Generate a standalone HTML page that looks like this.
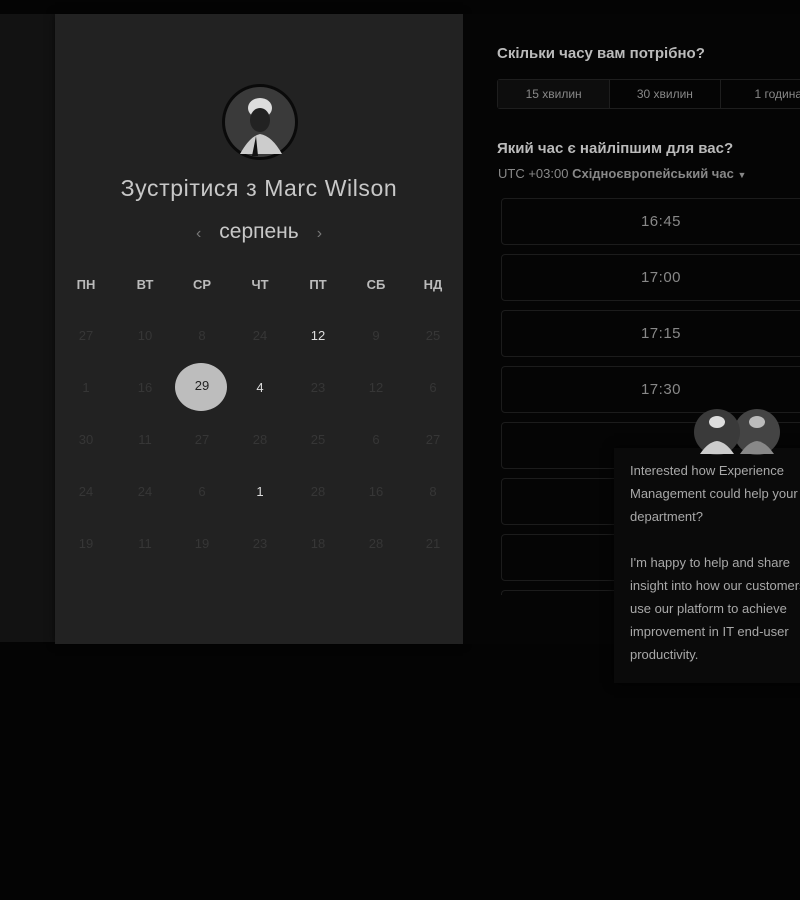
<!DOCTYPE html>
<html><head><meta charset="utf-8"><style>
*{margin:0;padding:0;box-sizing:border-box}
body{width:800px;height:900px;background:#040404;position:relative;overflow:hidden;font-family:"Liberation Sans",sans-serif}
.abs{position:absolute}
.left{left:0;top:14px;width:463px;height:628px;background:#121212}
.card{left:55px;top:14px;width:408px;height:630px;background:#222;box-shadow:0 0 8px rgba(0,0,0,.6)}
.right{left:463px;top:14px;width:337px;height:630px;background:#050505}
.d{position:absolute;width:40px;text-align:center;font-size:13px;color:#3a3a3a;transform:translate(-20px,-8px)}
.h{position:absolute;width:40px;text-align:center;font-size:13px;font-weight:bold;color:#bbb;transform:translate(-20px,-8px)}
.slot{position:absolute;left:501px;width:320px;height:47px;border:1px solid #1c1c1c;border-radius:4px;color:#888;font-size:15px;text-align:center;line-height:45px;letter-spacing:.5px}
.pt{font-size:13px;color:#a8a8a8;line-height:23px}
</style></head><body>
<div class="abs left"></div>
<div class="abs card"></div>
<div class="abs right"></div>
<svg class="abs" style="left:220px;top:84px" width="80" height="76"><circle cx="40" cy="38" r="38" fill="#0a0a0a"/><circle cx="40" cy="38" r="35" fill="#3a3a3a"/><ellipse cx="40" cy="24" rx="12" ry="10" fill="#ddd"/><ellipse cx="40" cy="36" rx="10" ry="12" fill="#222"/><path d="M20 70 Q30 52 40 50 Q52 52 62 70 Z" fill="#ccc"/><path d="M36 52 L32 72 L38 72 Z" fill="#111"/></svg>
<div class="abs" style="left:55px;width:408px;top:175px;text-align:center;font-size:23px;letter-spacing:0.6px;color:#c8c8c8">Зустрітися з Marc Wilson</div>
<div class="abs" style="left:55px;width:408px;top:220px;text-align:center;font-size:21px;color:#c8c8c8"><span style="color:#777;font-size:16px;margin-right:18px">‹</span>серпень<span style="color:#777;font-size:16px;margin-left:18px">›</span></div>
<div class="h" style="left:86px;top:285px">ПН</div><div class="h" style="left:145px;top:285px">ВТ</div><div class="h" style="left:202px;top:285px">СР</div><div class="h" style="left:260px;top:285px">ЧТ</div><div class="h" style="left:318px;top:285px">ПТ</div><div class="h" style="left:376px;top:285px">СБ</div><div class="h" style="left:433px;top:285px">НД</div>
<div class="abs" style="left:175px;top:363px;width:52px;height:48px;border-radius:50%;background:#bdbdbd"></div>
<div id="g"></div>
<script>
var r=[["27","10","8","24","12","9","25"],["1","16","29","4","23","12","6"],["30","11","27","28","25","6","27"],["24","24","6","1","28","16","8"],["19","11","19","23","18","28","21"]];
var xs=[86,145,202,260,318,376,433],ys=[336,388,440,492,544],h="";
r.forEach(function(row,i){row.forEach(function(v,j){var c="#363636";if((i==0&&j==4)||(i==1&&j==3)||(i==3&&j==3))c="#ddd";if(i==1&&j==2)c="#222";h+='<div class="d" style="left:'+xs[j]+'px;top:'+(ys[i]-(i==1&&j==2?2:0))+'px;color:'+c+'">'+v+'</div>';});});
document.getElementById("g").innerHTML=h;
</script>
<div class="abs" style="left:497px;top:45px;font-size:15px;font-weight:bold;color:#bbb">Скільки часу вам потрібно?</div>
<div class="abs" style="left:497px;top:79px;width:320px;height:30px;border:1px solid #1e1e1e;border-radius:3px;display:flex;font-size:12px;color:#888">
<div style="width:113px;line-height:28px;text-align:center;background:#0d0d0d;border-right:1px solid #1e1e1e">15 хвилин</div>
<div style="width:111px;line-height:28px;text-align:center;border-right:1px solid #1e1e1e">30 хвилин</div>
<div style="width:96px;line-height:28px;text-align:center;white-space:nowrap;padding-left:20px">1 година</div></div>
<div class="abs" style="left:497px;top:140px;font-size:15px;font-weight:bold;color:#bbb">Який час є найліпшим для вас?</div>
<div class="abs" style="left:498px;top:166px;font-size:13px;color:#888">UTC +03:00 <b>Східноєвропейський час</b> <span style="font-size:9px">▼</span></div>
<div class="slot" style="top:198px">16:45</div><div class="slot" style="top:254px">17:00</div><div class="slot" style="top:310px">17:15</div><div class="slot" style="top:366px">17:30</div><div class="slot" style="top:422px"></div><div class="slot" style="top:478px"></div><div class="slot" style="top:534px"></div>
<div class="abs" style="left:501px;top:590px;width:320px;height:5px;border:1px solid #1c1c1c;border-bottom:none;border-radius:4px 4px 0 0"></div>
<div class="abs" style="left:614px;top:448px;width:200px;height:235px;background:#0a0a0a;box-shadow:0 0 10px rgba(0,0,0,.8);padding:11px 0 0 16px;white-space:nowrap">
<div class="pt">Interested how Experience<br>Management could help your<br>department?<br><br>I'm happy to help and share<br>insight into how our customers<br>use our platform to achieve<br>improvement in IT end-user<br>productivity.</div></div>
<svg class="abs" style="left:692px;top:408px" width="90" height="50"><circle cx="65" cy="24" r="23" fill="#444"/><ellipse cx="65" cy="14" rx="8" ry="6" fill="#bbb"/><path d="M48 46 Q56 34 65 33 Q74 34 82 46 Z" fill="#888"/><circle cx="25" cy="24" r="23" fill="#3a3a3a"/><ellipse cx="25" cy="14" rx="8" ry="6" fill="#ddd"/><path d="M8 46 Q16 34 25 33 Q34 34 42 46 Z" fill="#ccc"/></svg>
</body></html>
